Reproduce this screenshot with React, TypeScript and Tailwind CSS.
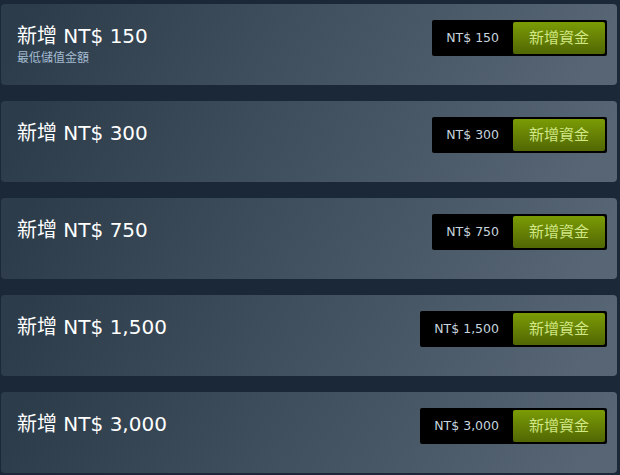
import React from 'react';

type Amount = {
  label: string;
  note?: string;
};

const amounts: Amount[] = [
  { label: '150', note: '最低儲值金額' },
  { label: '300' },
  { label: '750' },
  { label: '1,500' },
  { label: '3,000' },
];

const FONT = '"DejaVu Sans", "Noto Sans CJK TC", sans-serif';

const AddFundsCard: React.FC<{ item: Amount }> = ({ item }) => {
  return (
    <div className="relative h-[81px] rounded-[4px] bg-[linear-gradient(-60deg,rgba(226,244,255,0.3)_5%,rgba(84,107,115,0.3)_95%)] px-4 pt-[18px]">
      <div className="text-[20px] leading-[28px] text-white">新增 NT$ {item.label}</div>
      {item.note && <div className="mt-[1px] text-[12px] leading-[14px] text-[#a3bbd1]">{item.note}</div>}

      {/* purchase action */}
      <div className="absolute right-[10px] top-[16px] flex items-center rounded-[2px] bg-black p-[2px] pl-0">
        <div className="px-[14px] text-[12.5px] text-[#c6d4df]">NT$ {item.label}</div>
        <button className="h-[32px] rounded-[2px] bg-[linear-gradient(to_bottom,#799905_5%,#536904_95%)] px-[16px] text-[15px] text-[#d2e885]">
          新增資金
        </button>
      </div>
    </div>
  );
};

export default function App() {
  return (
    <div className="min-h-screen bg-[#1b2838] pl-[1px] pr-[3px] pt-[4px]" style={{ fontFamily: FONT }}>
      <div className="flex flex-col gap-4">
        {amounts.map((a) => (
          <AddFundsCard key={a.label} item={a} />
        ))}
      </div>
    </div>
  );
}
